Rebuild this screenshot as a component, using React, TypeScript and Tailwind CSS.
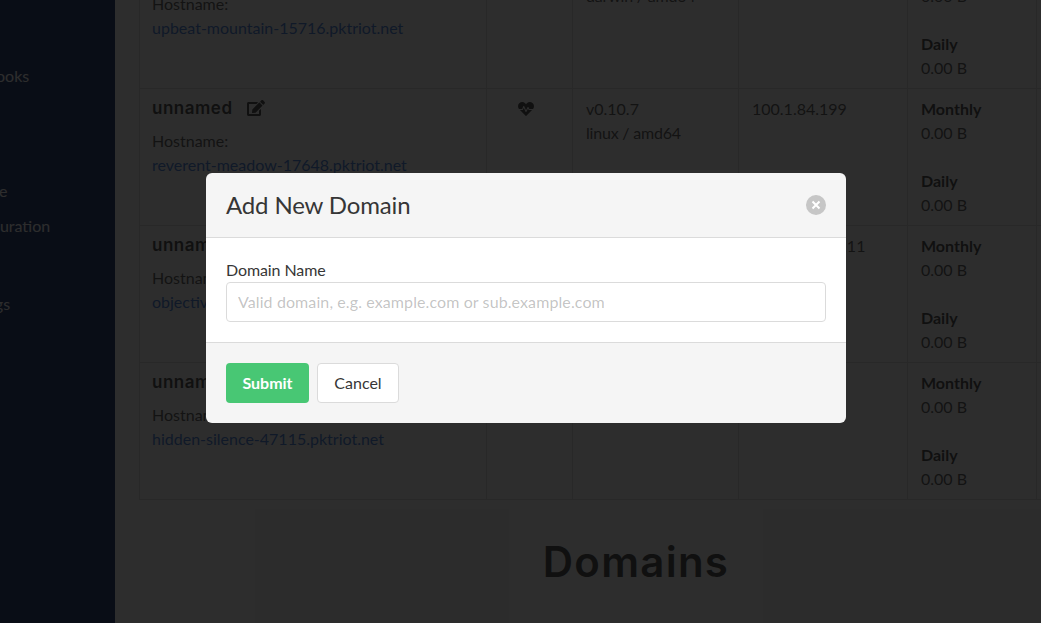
import { FaEdit, FaHeartbeat } from "react-icons/fa";

type Row = {
  hostname: string;
  version: string;
  platform: string;
  ip: string;
};

const rows: Row[] = [
  { hostname: "upbeat-mountain-15716.pktriot.net", version: "v0.10.7", platform: "darwin / amd64", ip: "" },
  { hostname: "reverent-meadow-17648.pktriot.net", version: "v0.10.7", platform: "linux / amd64", ip: "100.1.84.199" },
  { hostname: "objective-river-20913.pktriot.net", version: "v0.10.7", platform: "linux / amd64", ip: "100.112.133.11" },
  { hostname: "hidden-silence-47115.pktriot.net", version: "v0.10.7", platform: "linux / amd64", ip: "100.1.8.20" },
];

function Usage() {
  return (
    <div>
      <p className="font-bold text-[#363636]">Monthly</p>
      <p>0.00 B</p>
      <p className="mt-6 font-bold text-[#363636]">Daily</p>
      <p>0.00 B</p>
    </div>
  );
}

function TunnelRow({ row }: { row: Row }) {
  return (
    <div className="grid h-[137px] grid-cols-[346px_86px_166px_169px_129px_97px] border-b border-[#dbdbdb]">
      <div className="px-3 pt-[7px]">
        <div className="flex h-6 items-center">
          <span className="font-['Inter',sans-serif] text-[17px] font-semibold tracking-[.03em] text-[#363636]">unnamed</span>
          <FaEdit className="ml-[14px] text-[18px] text-[#363636]" />
        </div>
        <p className="mt-[9px]">Hostname:</p>
        <a className="text-[#3273dc]">{row.hostname}</a>
      </div>
      <div className="border-l border-[#dbdbdb] pt-3 pl-[31px]">
        <FaHeartbeat className="text-[16px] text-[#363636]" />
      </div>
      <div className="border-l border-[#dbdbdb] px-[13px] pt-2">
        <p>{row.version}</p>
        <p className="tracking-[-.2px]">{row.platform}</p>
      </div>
      <div className="border-l border-[#dbdbdb] px-[13px] pt-2">{row.ip}</div>
      <div className="border-l border-[#dbdbdb] px-[13px] pt-2">
        <Usage />
      </div>
      <div className="border-l border-[#dbdbdb]" />
    </div>
  );
}

function AddDomainModal() {
  return (
    <div className="absolute inset-0 flex items-center justify-center bg-[#0a0a0a]/86 pb-[27px] pl-[11px]">
      <div className="w-[640px] overflow-hidden rounded-md">
        <header className="flex h-[65px] items-center justify-between border-b border-[#dbdbdb] bg-[#f5f5f5] px-5">
          <h2 className="text-2xl leading-6 tracking-[-.15px] text-[#363636]">Add New Domain</h2>
          <button className="flex h-5 w-5 items-center justify-center rounded-full bg-[#0a0a0a]/20">
            <svg width="10" height="10" viewBox="0 0 10 10">
              <path d="M1.5 1.5l7 7M8.5 1.5l-7 7" stroke="#fff" strokeWidth="2" />
            </svg>
          </button>
        </header>
        <section className="bg-white p-5">
          <label className="block leading-6 tracking-[-.1px] text-[#363636]">Domain Name</label>
          <input
            readOnly
            placeholder="Valid domain, e.g. example.com or sub.example.com"
            className="block h-10 w-full rounded border border-[#dbdbdb] px-[11px] pb-[2px] tracking-[.1px] placeholder:text-[#363636]/30"
          />
        </section>
        <footer className="flex gap-2 border-t border-[#dbdbdb] bg-[#f5f5f5] p-5">
          <button className="h-10 w-[83px] rounded bg-[#48c774] font-bold text-white">Submit</button>
          <button className="h-10 w-[82px] rounded border border-[#dbdbdb] bg-white text-[#363636]">Cancel</button>
        </footer>
      </div>
    </div>
  );
}

export default function App() {
  return (
    <div className="relative flex h-[623px] w-[1041px] overflow-hidden bg-white font-['Lato',sans-serif] text-[16px] leading-6 text-[#4a4a4a]">
      <aside className="w-[115px] shrink-0 overflow-hidden bg-[#031f60] pt-16 text-white">
        <nav className="-ml-[46px] whitespace-nowrap">
          <p>Webhooks</p>
          <p className="mt-[91px]">Storage</p>
          <p className="mt-[11px]">Configuration</p>
          <p className="mt-[54px]">Settings</p>
        </nav>
      </aside>
      <main className="-mt-[49px] ml-6 w-[994px] shrink-0">
        <div className="border-x border-t border-[#dbdbdb]">
          {rows.map((row) => (
            <TunnelRow key={row.hostname} row={row} />
          ))}
        </div>
        <h1 className="mt-[34px] text-center font-['Inter',sans-serif] text-[42px] leading-[56px] font-semibold tracking-[.03em] text-[#363636]">
          Domains
        </h1>
      </main>
      <AddDomainModal />
    </div>
  );
}
